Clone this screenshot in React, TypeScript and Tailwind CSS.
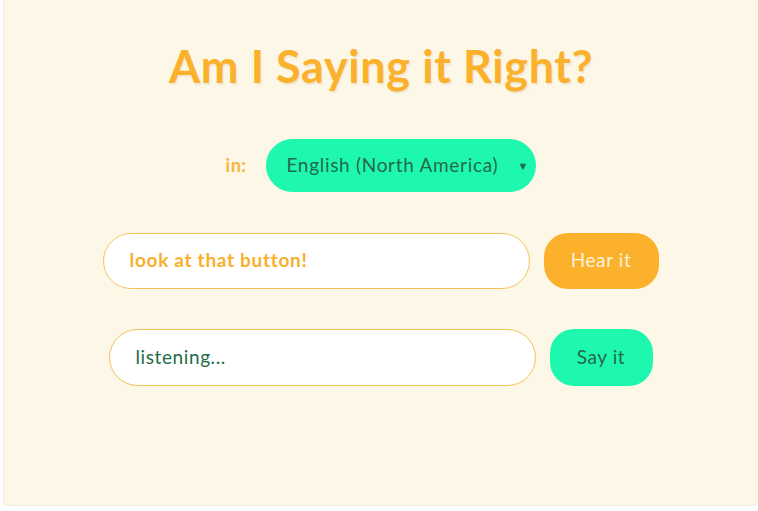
export default function App() {
  return (
    <div className="h-[511px] w-[758px] bg-white pl-[3px] pb-[5px] font-['Lato','Noto_Sans',sans-serif]">
      <div className="flex h-full flex-col items-center rounded-br-md rounded-bl-md border-b border-l border-[#f3ecd9] bg-[#fdf7e7]">
        {/* Title */}
        <h1 className="mt-[33px] text-[45px] font-bold tracking-[0.6px] text-[#fbb12b] [text-shadow:1px_2px_1px_rgba(200,190,150,0.25)]">
          Am I Saying it Right?
        </h1>

        {/* Language select */}
        <div className="mt-[38px] flex items-center gap-[20px]">
          <span className="text-[18px] font-bold tracking-[0.5px] text-[#f5b53c]">in:</span>
          <div className="relative flex h-[53px] w-[270px] items-center rounded-full bg-[#1ef8ae] pl-[20px]">
            <span className="text-[19px] tracking-[0.7px] text-[#226a4a]">English (North America)</span>
            <span className="absolute right-[8px] top-[19px] text-[11px] text-[#226a4a]">▼</span>
          </div>
        </div>

        {/* Hear row */}
        <div className="mt-[41px] -ml-px flex items-center gap-[14px]">
          <div className="flex h-[56px] w-[427px] items-center rounded-full border border-[#f7c25a] bg-white pl-[26px]">
            <span className="text-[19px] font-bold tracking-[0.7px] text-[#f8b02c]">look at that button!</span>
          </div>
          <button className="h-[56px] w-[115px] rounded-[24px] bg-[#fbb12b] text-[19px] tracking-[0.6px] text-[#fdf2dc]">
            Hear it
          </button>
        </div>

        {/* Say row */}
        <div className="mt-[40px] -ml-px flex items-center gap-[14px]">
          <div className="flex h-[57px] w-[427px] items-center rounded-full border border-[#f4c058] bg-white pl-[26px]">
            <span className="text-[19px] tracking-[0.6px] text-[#1f6b45]">listening...</span>
          </div>
          <button className="h-[57px] w-[103px] rounded-[24px] bg-[#1ef8ae] text-[19px] tracking-[0.6px] text-[#226a4a]">
            Say it
          </button>
        </div>
      </div>
    </div>
  );
}
